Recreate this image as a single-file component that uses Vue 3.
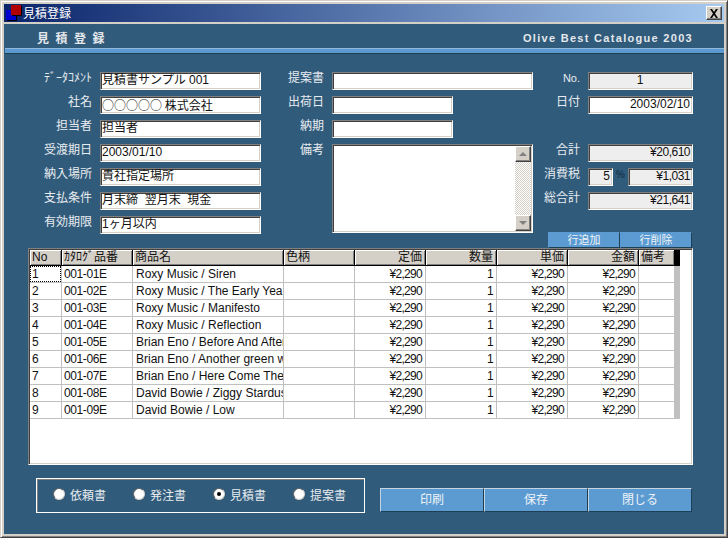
<script setup>
const leftFields = [
  { label: 'ﾃﾞｰﾀｺﾒﾝﾄ', value: '見積書サンプル 001' },
  { label: '社名', value: '○○○○○ 株式会社', jp: true },
  { label: '担当者', value: '担当者' },
  { label: '受渡期日', value: '2003/01/10' },
  { label: '納入場所', value: '貴社指定場所' },
  { label: '支払条件', value: '月末締\u00a0\u00a0翌月末\u00a0\u00a0現金' },
  { label: '有効期限', value: '1ヶ月以内' }
]

const columns = [
  { title: 'No' },
  { title: 'ｶﾀﾛｸﾞ品番' },
  { title: '商品名' },
  { title: '色柄' },
  { title: '定価', right: true },
  { title: '数量', right: true },
  { title: '単価', right: true },
  { title: '金額', right: true },
  { title: '備考' }
]

const names = [
  'Roxy Music / Siren',
  'Roxy Music / The Early Years',
  'Roxy Music / Manifesto',
  'Roxy Music / Reflection',
  'Brian Eno / Before And After',
  'Brian Eno / Another green world',
  'Brian Eno / Here Come The Warm',
  'David Bowie / Ziggy Stardust',
  'David Bowie / Low'
]

const docTypes = ['依頼書', '発注書', '見積書', '提案書']
const actions = ['印刷', '保存', '閉じる']
</script>

<template>
  <div class="window">
    <div class="titlebar">
      <span class="app-icon"><i class="blue"></i><i class="red"></i></span>
      <span class="title-text">見積登録</span>
      <button class="close-btn">
        <svg width="10" height="9" viewBox="0 0 10 9"><path d="M1 0h2l2 3 2-3h2L6 4.500 9 9H7L5 6 3 9H1l3-4.500z" fill="#000" /></svg>
      </button>
    </div>

    <div class="body">
      <div class="banner">
        <span class="banner-title">見積登録</span>
        <span class="banner-sub">Olive Best Catalogue 2003</span>
      </div>
      <div class="stripe"></div>

      <div class="form">
        <div class="col col-left">
          <div v-for="f in leftFields" :key="f.label" class="row">
            <label class="lbl">{{ f.label }}</label>
            <div class="field" :class="{ jp: f.jp }">{{ f.value }}</div>
          </div>
        </div>

        <div class="col col-mid">
          <div class="row">
            <label class="lbl">提案書</label>
            <div class="field wide"></div>
          </div>
          <div class="row">
            <label class="lbl">出荷日</label>
            <div class="field short"></div>
          </div>
          <div class="row">
            <label class="lbl">納期</label>
            <div class="field short"></div>
          </div>
          <div class="row memo-row">
            <label class="lbl">備考</label>
            <div class="field wide memo">
              <div class="scrollbar">
                <span class="sb-btn"><i class="arrow up"></i></span>
                <span class="sb-track"></span>
                <span class="sb-btn"><i class="arrow down"></i></span>
              </div>
            </div>
          </div>
        </div>

        <div class="col col-right">
          <div class="row">
            <label class="lbl small-lbl">No.</label>
            <div class="field total ro center">1</div>
          </div>
          <div class="row">
            <label class="lbl">日付</label>
            <div class="field total end">2003/02/10</div>
          </div>
          <div class="row gap-row">
            <label class="lbl">合計</label>
            <div class="field total ro end num">¥20,610</div>
          </div>
          <div class="row">
            <label class="lbl">消費税</label>
            <div class="field rate ro end">5</div>
            <span class="pct">%</span>
            <div class="field tax ro end num">¥1,031</div>
          </div>
          <div class="row">
            <label class="lbl">総合計</label>
            <div class="field total ro end num">¥21,641</div>
          </div>
          <div class="line-btns">
            <button class="blue-btn small">行追加</button>
            <button class="blue-btn small">行削除</button>
          </div>
        </div>
      </div>

      <div class="grid">
        <div class="grid-head">
          <div v-for="c in columns" :key="c.title" class="head-cell" :class="{ right: c.right }">{{ c.title }}</div>
          <div class="head-end"></div>
        </div>
        <div v-for="(name, i) in names" :key="name" class="grid-row">
          <div class="cell no"><span :class="{ focus: i === 0 }">{{ i + 1 }}</span></div>
          <div class="cell code">001-0{{ i + 1 }}E</div>
          <div class="cell name">{{ name }}</div>
          <div class="cell"></div>
          <div class="cell right price">¥2,290</div>
          <div class="cell right price">1</div>
          <div class="cell right price">¥2,290</div>
          <div class="cell right price">¥2,290</div>
          <div class="cell"></div>
          <div class="row-end"></div>
        </div>
      </div>

      <div class="footer">
        <div class="doc-types">
          <div v-for="d in docTypes" :key="d" class="radio-item">
            <span class="radio" :class="{ on: d === '見積書' }"></span>
            <span class="radio-text">{{ d }}</span>
          </div>
        </div>
        <div class="actions">
          <button v-for="a in actions" :key="a" class="blue-btn big">{{ a }}</button>
        </div>
      </div>
    </div>
  </div>
</template>

<style>
html, body {
  margin: 0;
  background: #d4d0c8;
}
</style>

<style scoped>
* {
  box-sizing: border-box;
}
.window {
  width: 728px;
  height: 538px;
  padding: 3px;
  background: #d4d0c8;
  border: 1px solid;
  border-color: #d4d0c8 #404040 #404040 #d4d0c8;
  box-shadow: inset 1px 1px #fff, inset -1px -1px #808080;
  display: flex;
  flex-direction: column;
  font-family: "Liberation Sans", "Noto Sans CJK JP", sans-serif;
  font-size: 12px;
  overflow: hidden;
}

/* title bar */
.titlebar {
  height: 18px;
  flex: none;
  display: flex;
  align-items: center;
  background: linear-gradient(90deg, #0a246a, #a6caf0);
  color: #fff;
  position: relative;
}
.app-icon {
  width: 18px;
  height: 18px;
  flex: none;
  position: relative;
}
.app-icon i {
  position: absolute;
  display: block;
  width: 10px;
  height: 10px;
  box-shadow: 1px 1px #000;
}
.app-icon .blue {
  left: 2px;
  top: 6px;
  background: #0000d0;
}
.app-icon .red {
  left: 7px;
  top: 1px;
  background: #b00000;
}
.title-text {
  font-size: 12px;
  margin-left: 1px;
  padding-bottom: 2px;
}
.close-btn {
  margin-left: auto;
  margin-right: 2px;
  width: 16px;
  height: 14px;
  padding: 0;
  display: flex;
  align-items: center;
  justify-content: center;
  background: #d4d0c8;
  border: 1px solid;
  border-color: #fff #404040 #404040 #fff;
  box-shadow: inset -1px -1px #808080;
}

.body {
  flex: 1;
  margin-top: 1px;
  background: #315b7b;
  border-top: 1px solid #d4d0c8;
  display: flex;
  flex-direction: column;
  min-height: 0;
}

.banner {
  height: 24px;
  flex: none;
  display: flex;
  align-items: center;
  justify-content: space-between;
  padding: 3px 31px 0 33px;
  color: #e4e8ec;
  font-weight: bold;
}
.banner-title {
  letter-spacing: 6.5px;
}
.banner-sub {
  font-size: 11px;
  letter-spacing: 1.3px;
}
.stripe {
  height: 6px;
  flex: none;
  margin-left: 1px;
  background: #5b9bd1;
  border-top: 1px solid #8fb8dc;
  border-bottom: 1px solid #1f3f57;
}

/* form */
.form {
  flex: none;
  display: flex;
  align-items: flex-start;
  height: 194px;
  padding-top: 18px;
}
.col {
  display: flex;
  flex-direction: column;
  gap: 6px;
}
.row {
  display: flex;
  height: 18px;
}
.lbl {
  flex: none;
  margin-right: 8px;
  margin-top: -2px;
  line-height: 16px;
  text-align: right;
  color: #e8ecf0;
}
.small-lbl {
  font-size: 11px;
}
.col-left .lbl {
  width: 88px;
}
.col-mid .lbl {
  width: 63px;
}
.col-right .lbl {
  width: 47px;
}
.field {
  width: 161px;
  height: 18px;
  padding: 0 2px 0 1px;
  line-height: 15px;
  background: #fff;
  color: #111;
  border: 1px solid;
  border-color: #808080 #fff #fff #808080;
  box-shadow: inset 1px 1px #404040, inset -1px -1px #d4d0c8;
  white-space: nowrap;
  overflow: hidden;
}
.jp {
  font-family: "Noto Sans CJK JP", sans-serif;
}
.num {
  letter-spacing: -0.5px;
}
.ro {
  background: #eeeeee;
}
.end {
  text-align: right;
}
.center {
  text-align: center;
}
.wide {
  width: 201px;
}
.short {
  width: 121px;
}
.total {
  width: 105px;
}
.rate {
  width: 25px;
}
.pct {
  width: 15px;
  text-align: center;
  font-size: 10px;
  font-weight: bold;
  line-height: 14px;
  color: #1a3a52;
}
.tax {
  width: 65px;
}
.memo-row {
  height: 89px;
}
.memo {
  height: 89px;
  position: relative;
  padding: 0;
}
.scrollbar {
  position: absolute;
  top: 1px;
  right: 1px;
  bottom: 1px;
  width: 16px;
  display: flex;
  flex-direction: column;
}
.sb-btn {
  height: 16px;
  flex: none;
  display: flex;
  align-items: center;
  justify-content: center;
  background: #d4d0c8;
  border: 1px solid;
  border-color: #fff #404040 #404040 #fff;
  box-shadow: inset -1px -1px #808080;
}
.sb-track {
  flex: 1;
  background: repeating-conic-gradient(#d4d0c8 0 25%, #fff 0 50%) 0 0 / 2px 2px;
}
.arrow {
  width: 0;
  height: 0;
  border-left: 4px solid transparent;
  border-right: 4px solid transparent;
}
.arrow.up {
  border-bottom: 4px solid #808080;
}
.arrow.down {
  border-top: 4px solid #808080;
}
.gap-row {
  margin-top: 24px;
}
.line-btns {
  display: flex;
  margin-top: 16px;
  margin-left: 15px;
}

.blue-btn {
  padding: 0;
  font: inherit;
  color: #eef3f8;
  background: #5b9bd1;
  border: 1px solid;
  border-color: #c4d4e0 #1f3f57 #1f3f57 #c4d4e0;
}
.small {
  width: 72px;
  height: 16px;
  font-size: 11px;
  line-height: 12px;
  border-left-color: #5b9bd1;
  border-top-color: #5b9bd1;
}
.big {
  width: 104px;
  height: 24px;
  padding-bottom: 3px;
}

/* table */
.grid {
  flex: none;
  width: 665px;
  height: 217px;
  margin-left: 24px;
  background: #fff;
  border: 1px solid;
  border-color: #808080 #fff #fff #808080;
  box-shadow: inset 1px 1px #404040, inset -1px -1px #d4d0c8;
  padding: 1px;
  overflow: hidden;
}
.grid-head,
.grid-row {
  display: grid;
  grid-template-columns: 32px 71px 151px 71px 71px 71px 71px 71px 36px 5px;
}
.grid-head {
  height: 16px;
}
.head-cell {
  background: #d4d0c8;
  color: #111;
  padding: 0 3px 0 2px;
  line-height: 15px;
  border-right: 1px solid #000;
  border-bottom: 1px solid #000;
  box-shadow: inset 1px 1px #fff, inset -1px -1px #808080;
}
.head-end {
  background: #000;
}
.grid-row {
  height: 17px;
}
.cell {
  padding: 0 3px 0 2px;
  line-height: 16px;
  color: #111;
  border-right: 1px solid #c0c0c0;
  border-bottom: 1px solid #c0c0c0;
  white-space: nowrap;
  overflow: hidden;
}
.right {
  text-align: right;
}
.code {
  letter-spacing: -0.4px;
}
.price {
  letter-spacing: -0.7px;
}
.name {
  padding-left: 3px;
}
.no {
  padding: 0;
}
.no span {
  padding-left: 2px;
}
.focus {
  display: block;
  height: 16px;
  outline: 1px dotted #000;
  outline-offset: -1px;
}
.row-end {
  background: #c0c0c0;
}

/* footer */
.footer {
  flex: 1;
  display: flex;
  align-items: flex-start;
  padding: 13px 0 0 32px;
}
.doc-types {
  width: 329px;
  height: 35px;
  display: grid;
  grid-template-columns: repeat(4, 80px);
  align-items: center;
  padding: 0 0 3px 16px;
  border: 1px solid #fff;
  box-shadow: inset 1px 1px #808080;
}
.radio-item {
  display: flex;
  align-items: center;
  gap: 5px;
  color: #e8ecf0;
}
.radio {
  width: 12px;
  height: 12px;
  border-radius: 50%;
  background: #fff;
  border: 1px solid;
  border-color: #606060 #d4d0c8 #d4d0c8 #606060;
  position: relative;
}
.radio.on::after {
  content: '';
  position: absolute;
  left: 3px;
  top: 3px;
  width: 4px;
  height: 4px;
  border-radius: 50%;
  background: #000;
}
.actions {
  display: flex;
  margin-left: 15px;
  margin-top: 10px;
}
</style>
